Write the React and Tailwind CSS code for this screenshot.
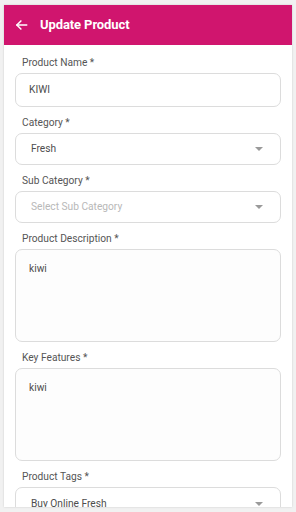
import React from 'react';

const Label = ({ children }) => (
  <div className="text-[10.2px] leading-[14px] text-[#555] pl-[7px] mb-[3px]">{children}</div>
);

const Caret = () => (
  <span className="w-0 h-0 border-l-[4px] border-r-[4px] border-t-[4px] border-l-transparent border-r-transparent border-t-[#9a9a9a]" />
);

const TextInput = ({ value }) => (
  <div className="h-[34px] border border-[#dcdcdc] rounded-[7px] flex items-center px-[13px] text-[10.2px] text-[#4d4d4d]">
    {value}
  </div>
);

const Select = ({ value, placeholder, h = 'h-[32px]' }) => (
  <div className={`${h} shrink-0 border border-[#dcdcdc] rounded-[7px] flex items-center justify-between pl-[15px] pr-[17px] text-[10.2px]`}>
    <span className={value ? 'text-[#4d4d4d]' : 'text-[#b8b8b8]'}>{value || placeholder}</span>
    <Caret />
  </div>
);

const TextArea = ({ value }) => (
  <div className="h-[93px] border border-[#dcdcdc] rounded-[7px] px-[13px] pt-[11px] text-[10.2px] text-[#4d4d4d] bg-[#fdfdfd]">
    {value}
  </div>
);

const Field = ({ label, children }) => (
  <div className="mb-[9px]">
    <Label>{label}</Label>
    {children}
  </div>
);

export default function App() {
  return (
    <div className="w-[296px] h-[512px] bg-[#f1f1f1] pt-[5px] px-[4px] overflow-hidden" style={{ fontFamily: 'Roboto, Arial, sans-serif' }}>
      <div className="bg-white h-[502px] shadow-[0_0_2px_rgba(0,0,0,0.15)] overflow-hidden">
        <div className="h-[40px] bg-[#d0156e] flex items-center px-[10px] gap-[11px]">
          <svg width="15" height="14" viewBox="0 0 24 24" fill="none" stroke="white" strokeWidth="2.6" strokeLinecap="round" strokeLinejoin="round">
            <path d="M21 12H4" />
            <path d="M11 5l-7 7 7 7" />
          </svg>
          <span className="text-white font-bold text-[13px] tracking-[-0.1px]">Update Product</span>
        </div>
        <div className="px-[11px] pt-[11px]">
          <Field label="Product Name *"><TextInput value="KIWI" /></Field>
          <Field label="Category *"><Select value="Fresh" /></Field>
          <Field label="Sub Category *"><Select placeholder="Select Sub Category" /></Field>
          <Field label="Product Description *"><TextArea value="kiwi" /></Field>
          <Field label="Key Features *"><TextArea value="kiwi" /></Field>
          <Field label="Product Tags *"><Select value="Buy Online Fresh" h="h-[34px]" /></Field>
        </div>
      </div>
    </div>
  );
}
